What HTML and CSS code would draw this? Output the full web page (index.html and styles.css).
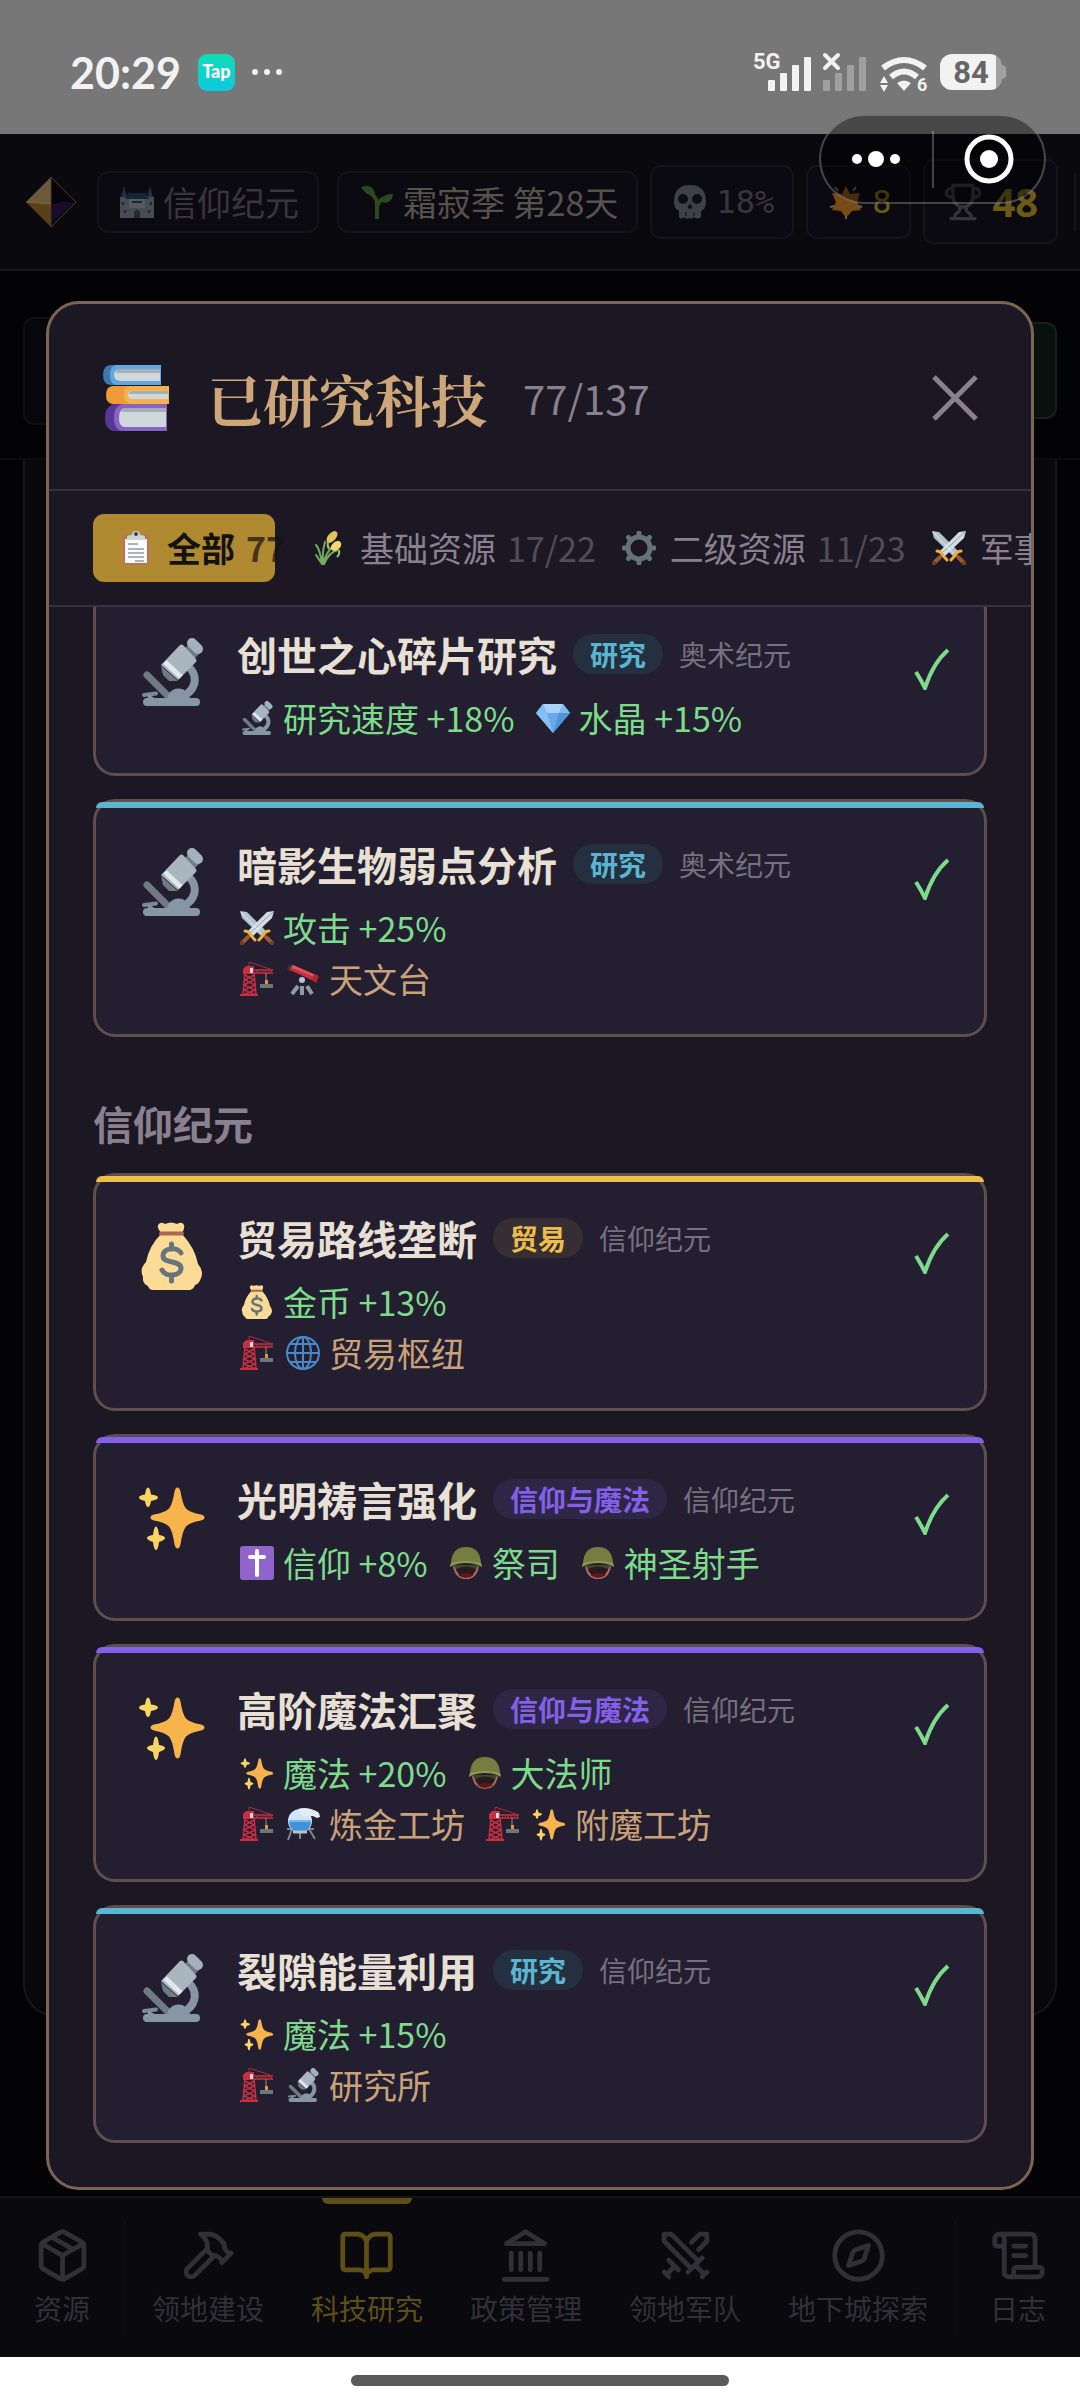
FILE: index.html
```html
<!DOCTYPE html>
<html lang="zh-CN">

<head>
    <meta charset="UTF-8">
    <meta name="viewport" content="width=device-width, initial-scale=1.0">
    <title>已研究科技</title>
    <link rel="stylesheet" href="styles.css">
</head>

<body>
    <!-- shared icons -->
    <svg class="sprite" aria-hidden="true">
        <symbol id="i-microscope" viewBox="0 0 68 68">
            <path d="M51 29c8 8 8 19-2 27" fill="none" stroke="#8796a5" stroke-width="8" />
            <path d="M9 37l20 20" stroke="#6f7a82" stroke-width="7" stroke-linecap="round" />
            <path d="M6 57l12-1.500" stroke="#7d8994" stroke-width="4" stroke-linecap="round" />
            <path d="M29 62a11.500 11.500 0 0 1 23 0z" fill="#8796a5" />
            <rect x="5" y="60" width="57" height="8" rx="4" fill="#8796a5" />
            <path d="M10 56l8 5h-8z" fill="#8796a5" />
            <path d="M48 9l10 10" stroke="#6f7a82" stroke-width="10" />
            <path d="M54 5l6 6" stroke="#a3b1bf" stroke-width="10" stroke-linecap="round" />
            <path d="M23 28l2 9 6 6 9 0z" fill="#6f7a82" />
            <path d="M42 7q2-1 3 0l13 14q1 2 0 3L40 42 23 27z" fill="#a9b6c0" />
            <path d="M27 24l16 15" stroke="#e3e8ea" stroke-width="5" />
        </symbol>
        <symbol id="i-sparkles" viewBox="0 0 68 68">
            <path d="M39.500 4.500q2 0 3 4 2 13 5.500 17 4 4 15 6 3.500 1 3.500 3t-3.500 3q-11 2-15 6-3.500 4-5.500 18-1 4-3 4t-3-4q-2-14-5.500-18-4-4-15-6-3.500-1-3.500-3t3.500-3q11-2 15-6 3.500-4 5.500-17 1-4 3-4z" fill="#f7b34c" />
            <path d="M10 4.500q2 0 3 7 7 1 7 3t-7 3.500q-1 6-3 6t-3-6q-6-1.500-6-3.500t6-3q1-7 3-7z" fill="#fbd564" />
            <path d="M18 43.500q2 0 3 8.500 6 1 6 3t-6 4q-1 8-3 8t-3-8q-6-2-6-4t6-3q1-8.500 3-8.500z" fill="#fbd564" />
        </symbol>
        <symbol id="i-bag" viewBox="0 0 68 68">
            <path d="M20 3q3-4 7-1 6-3 12 0 5-3 7 1 1 3-2 8H23q-4-5-3-8z" fill="#fbdb96" />
            <path d="M23 12h21q13 14 16 30 6 7 3 14-2 6-6 7-1 4-5 5H15q-4 0-5-4-6-3-5-9-4-8 3-15 3-16 15-28z" fill="#fbdb96" />
            <path d="M23 11.500h21" stroke="#a9674b" stroke-width="4" stroke-linecap="round" />
            <path d="M43 31c-3-6-18-6-18 3 0 8 18 4 18 12 0 9-16 9-19 2M33.500 22v5m0 26v6" fill="none" stroke="#66757a" stroke-width="5" stroke-linecap="round" />
        </symbol>
        <symbol id="i-gem" viewBox="0 0 34 34">
            <path d="M7 3h20l7 9-17 20L0 12z" fill="#68a9ea" />
            <path d="M7 3h20l-4 9H11z" fill="#a9d4f8" />
            <path d="M0 12L7 3l4 9zM27 3l7 9H23z" fill="#7fbcf2" />
            <path d="M0 12h11l6 20z" fill="#87bff0" />
            <path d="M23 12h11L17 32z" fill="#5093d8" />
        </symbol>
        <symbol id="i-blades" viewBox="0 0 34 34">
            <path d="M0 0l7 1 19 19-5 5L2 7z" fill="#b4c2cb" />
            <path d="M34 0l-7 1L8 20l5 5L32 7z" fill="#d2dde3" />
            <path d="M34 0L10 22" stroke="#8ea0ac" stroke-width="1" />
            <path d="M1 1l20 21" stroke="#e4ecf0" stroke-width="1" />
            <path d="M8 26l-6 6M26 26l6 6" stroke="#9a5a35" stroke-width="4" stroke-linecap="round" />
            <path d="M5 20q3 0 5 3t5 6M29 20q-3 0-5 3t-5 6" fill="none" stroke="#efb23d" stroke-width="3" stroke-linecap="round" />
            <circle cx="2" cy="32" r="2" fill="#6f3b22" />
            <circle cx="32" cy="32" r="2" fill="#6f3b22" />
        </symbol>
        <symbol id="i-crane" viewBox="0 0 34 34">
            <path d="M5 10L3 33M14 10l2 23M5 13l9 5-10 5 11 5-12 5M14 13l-9 5 10 5-11 5 12 5" fill="none" stroke="#c92f41" stroke-width="1.500" />
            <path d="M0 33h18" stroke="#c92f41" stroke-width="2" />
            <path d="M3 7l3-3h8v8H3z" fill="#c92f41" />
            <path d="M14 8h19M14 11h19" stroke="#c92f41" stroke-width="1.500" />
            <path d="M15 11l3-3 3 3 3-3 3 3 3-3 3 3M9 5V0l24 8" fill="none" stroke="#a92c3b" stroke-width="1" />
            <path d="M10 6h3v5h-3z" fill="#d5dde0" />
            <path d="M26 11v10" stroke="#a08a76" stroke-width="1" />
            <path d="M25 18h3v4h-3z" fill="#d69a3e" />
            <path d="M20 22h13v4H20z" fill="#6c767d" />
        </symbol>
        <symbol id="i-telescope" viewBox="0 0 34 34">
            <path d="M12 24L6 32M16 24v9M21 24l5 8" stroke="#8d9ba6" stroke-width="4" />
            <circle cx="16" cy="18" r="3" fill="#b9c4cc" />
            <path d="M3 2l5 2-3 6-4-2z" fill="#33363b" />
            <path d="M6 3l26 11-2 6L4 8z" fill="#c9303f" />
            <path d="M7 3l25 11-1 2L6 6z" fill="#e5525c" />
            <path d="M28 12l5 2-3 7-4-3z" fill="#ad2434" />
        </symbol>
        <symbol id="i-globe" viewBox="0 0 34 34">
            <g fill="none" stroke="#4b88c6" stroke-width="2">
                <circle cx="17" cy="17" r="16" />
                <ellipse cx="17" cy="17" rx="8" ry="16" />
                <path d="M17 1v32M1 17h32M4 8h26M4 26h26" />
            </g>
        </symbol>
        <symbol id="i-cross" viewBox="0 0 34 34">
            <rect width="34" height="34" rx="3" fill="#9164cb" />
            <path d="M17 5v24M10 11h14" stroke="#fff" stroke-width="4" stroke-linecap="round" />
        </symbol>
        <symbol id="i-helmet" viewBox="0 0 34 34">
            <path d="M5 20q2 12 12 12t12-12" fill="#2a1a20" stroke="#b0696b" stroke-width="2" />
            <path d="M9 29q8-4 16 0-8 6-16 0z" fill="#5a1a17" />
            <path d="M4 19h26l-3 4q-10-5-20 0z" fill="#3d4a2a" />
            <path d="M2 17Q3 1 17 1t15 16z" fill="#757d40" />
            <path d="M2 17q15-4 30 0 1 2 1 4-6-4-16-4T1 21q0-2 1-4z" fill="#8f9653" />
        </symbol>
        <symbol id="i-alembic" viewBox="0 0 34 34">
            <path d="M1 22h27M6 22L2 33M23 22l6 10M14 25v7" stroke="#7d8890" stroke-width="2" />
            <circle cx="14" cy="14" r="12" fill="#cfe5f5" />
            <path d="M12 2q9-3 20 3 2 2 2 5l-3 1q-6-4-14-1z" fill="#e3edf3" />
            <path d="M3 13h22q0 12-11 12T3 13z" fill="#3f93d9" />
            <path d="M3 13h22v2H3z" fill="#77b9ec" />
            <path d="M7 25h14" stroke="#b5c2ca" stroke-width="3" />
        </symbol>
        <symbol id="i-books" viewBox="0 0 68 68">
            <path d="M58 1v20H8q-7-1-7-10T8 1z" fill="#3c78ae" />
            <path d="M59 1v20H14q-6-1-6-10t6-10z" fill="#62a6e2" />
            <path d="M58 5v12H18q-6-1-6-6t6-6z" fill="#cfd8dd" />
            <path d="M58 5v4H14q1-4 4-4z" fill="#a4afb8" />
            <path d="M64 40v27H12q-9-1-9-13t9-14z" fill="#5a3796" />
            <path d="M65 40v27H20q-8-1-8-13t8-14z" fill="#8a61c4" />
            <path d="M64 44v19H22q-5-1-5-9t5-10z" fill="#cfd8dd" />
            <path d="M64 44v4H19q1-3 3-4z" fill="#a4afb8" />
            <path d="M67 22v18H10q-6-1-6-9t6-9z" fill="#f09a38" />
            <path d="M67 22v18H28q-6-1-6-9t6-9z" fill="#f6b14f" />
            <path d="M66 27v8H30q-4 0-4-4t4-4z" fill="#cfd8dd" />
            <path d="M66 27v3H27q1-3 3-3z" fill="#a4afb8" />
        </symbol>
        <symbol id="i-clipboard" viewBox="0 0 34 34">
            <rect x="4" y="4" width="26" height="30" rx="3" fill="#bd7257" />
            <path d="M6 8h22v24H6z" fill="#fbfbfb" />
            <path d="M9 13h10M9 18h16M9 22h16M9 26h16M16 30h9" stroke="#8f9aa0" stroke-width="1.500" />
            <path d="M8 9V6q0-2 5-2 0-4 4-4t4 4q5 0 5 2v3z" fill="#ccd4d8" />
            <circle cx="17" cy="3" r="2" fill="#3c3c46" />
        </symbol>
        <symbol id="i-wheat" viewBox="0 0 34 34">
            <path d="M11 33q3-12 12-20M12 33q5-12 14-14M10 33Q8 18 4 14M11 31q-1-10 2-20M10 33q-4-6-6-9" fill="none" stroke="#71ad5c" stroke-width="2" stroke-linecap="round" />
            <ellipse cx="20" cy="6" rx="4" ry="7" transform="rotate(40 20 6)" fill="#e4c75c" />
            <ellipse cx="24" cy="15" rx="4" ry="6" transform="rotate(50 24 15)" fill="#f0d873" />
            <path d="M16 10q-1 5 1 8M27 19q1 4-2 7" fill="none" stroke="#a7c46a" stroke-width="2" />
        </symbol>
        <symbol id="i-gear" viewBox="0 0 34 34">
            <g stroke="#66727a" fill="none">
                <circle cx="17" cy="17" r="11" stroke-width="5" />
                <path d="M17 5V2M17 29v3M5 17H2M29 17h3M8.500 8.500l-2-2M25.500 25.500l2 2M8.500 25.500l-2 2M25.500 8.500l2-2" stroke-width="5" stroke-linecap="round" />
            </g>
        </symbol>
        <symbol id="i-castle" viewBox="0 0 34 34">
            <path d="M0 12h34v21H0z" fill="#474b52" />
            <path d="M8 8h18l3 6H5z" fill="#16263a" />
            <path d="M1 12L4 1l3 11zM27 12l3-11 3 11z" fill="#1c3047" />
            <path d="M9 14h16v9H9z" fill="#565a61" />
            <path d="M14 33v-6q3-4 6 0v6z" fill="#25282d" />
            <path d="M12 17h10M3 17v3M31 17v3M5 25v3M29 25v3" stroke="#1b2836" stroke-width="2" />
        </symbol>
        <symbol id="i-sprout" viewBox="0 0 34 34">
            <path d="M17 33V17q-2-7-9-10M17 22q2-8 9-9" fill="none" stroke="#2d4a1e" stroke-width="4" stroke-linecap="round" />
            <path d="M1 2q12-4 14 7-9 2-14-7zM33 9q-1 11-12 8 2-9 12-8z" fill="#2d4a1e" />
        </symbol>
        <symbol id="i-skull" viewBox="0 0 34 34">
            <path d="M17 0Q1 0 1 17q0 7 5 9v6q2 3 5 0 2 3 5 1 2 2 5-1 4 3 7 0v-6q5-2 5-9Q33 0 17 0z" fill="#3e4145" />
            <circle cx="10" cy="14" r="5" fill="#0e0c14" />
            <circle cx="24" cy="14" r="5" fill="#0e0c14" />
            <path d="M17 19l2 4h-4zM13 27v4M21 27v4" fill="#0e0c14" stroke="#0e0c14" stroke-width="1" />
        </symbol>
        <symbol id="i-flare" viewBox="0 0 34 34">
            <path d="M17 1l4 8 10-1-3 9 4 8-9 1-6 7-5-7-9-1 4-8-4-9 10 1z" fill="#7a4a16" />
            <path d="M1 22l4-1M29 21l4 1M17 31v3M6 2l3 4M27 2l-3 4" stroke="#66605a" stroke-width="2" />
        </symbol>
        <symbol id="i-check" viewBox="0 0 36 42">
            <path d="M2 24q5 8 9 16Q19 15 34 2" fill="none" stroke="#7ddb8b" stroke-width="4" />
        </symbol>
    </svg>

    <div class="phone">
        <div class="status">
            <div class="status-left">
                <span class="time">20:29</span>
                <span class="tap">Tap</span>
                <svg width="30" height="8" viewBox="0 0 30 8" fill="#f2f2f2">
                    <circle cx="3" cy="4" r="3" />
                    <circle cx="15" cy="4" r="3" />
                    <circle cx="27" cy="4" r="3" />
                </svg>
            </div>
            <div class="status-right">
                <svg width="58" height="40" viewBox="0 0 58 40" fill="#f2f2f2">
                    <text x="0" y="17" class="net">5G</text>
                    <rect x="15" y="28" width="7" height="11" rx="1" />
                    <rect x="27" y="21" width="7" height="18" rx="1" />
                    <rect x="39" y="13" width="7" height="26" rx="1" />
                    <rect x="51" y="5" width="7" height="34" rx="1" />
                </svg>
                <svg width="45" height="40" viewBox="0 0 45 40" fill="#a0a0a0">
                    <rect x="0" y="28" width="7" height="11" rx="1" />
                    <rect x="12" y="21" width="7" height="18" rx="1" />
                    <rect x="24" y="13" width="7" height="26" rx="1" />
                    <rect x="36" y="5" width="7" height="34" rx="1" />
                    <path d="M2 3l13 13M15 3L2 16" stroke="#f2f2f2" stroke-width="4" stroke-linecap="round" />
                </svg>
                <svg width="48" height="40" viewBox="0 0 48 40" fill="#f2f2f2">
                    <path d="M3 16q21-16 42 0M11 25q13-11 26 0" fill="none" stroke="#f2f2f2" stroke-width="6" />
                    <path d="M17 31q7-5 14 0l-7 8z" />
                    <path d="M0 31l4-7 4 7zM0 33h8l-4 7z" />
                    <text x="37" y="39" class="band">6</text>
                </svg>
                <span class="battery"><span class="level">84</span></span>
            </div>
        </div>

        <div class="capsule">
            <button aria-label="更多">
                <svg width="48" height="18" viewBox="0 0 48 18" fill="#fff">
                    <circle cx="5" cy="9" r="5" />
                    <circle cx="24" cy="9" r="8" />
                    <circle cx="43" cy="9" r="5" />
                </svg>
            </button>
            <button aria-label="关闭小程序">
                <svg width="50" height="50" viewBox="0 0 50 50">
                    <circle cx="25" cy="25" r="22" fill="none" stroke="#fff" stroke-width="5" />
                    <circle cx="25" cy="25" r="9" fill="#fff" />
                </svg>
            </button>
        </div>

        <div class="game">
            <div class="topbar">
                <div class="place">
                    <svg class="logo" viewBox="0 0 50 50">
                        <path d="M25 0L0 25l25 2z" fill="#6b5a3c" />
                        <path d="M0 25l25 25V27z" fill="#5b3f16" />
                        <path d="M25 0v50l25-25z" fill="#070508" stroke="#4a3a2c" />
                        <path d="M26 45V28l12-4 10 2z" fill="#190c2a" />
                        <path d="M0 25l25 2" stroke="#8a6a30" />
                    </svg>
                    <div class="chip"><svg class="ico"><use href="#i-castle" /></svg><span>信仰纪元</span></div>
                    <div class="chip season"><svg class="ico"><use href="#i-sprout" /></svg><span>霜寂季 第28天</span></div>
                </div>
                <div class="stats">
                    <div class="chip stat mono"><svg class="ico"><use href="#i-skull" /></svg><span>18%</span></div>
                    <div class="chip stat mono gold"><svg class="ico"><use href="#i-flare" /></svg><span>8</span></div>
                    <div class="chip score gold">
                        <svg class="trophy" viewBox="0 0 24 24">
                            <path d="M6 9H4.500a2.500 2.500 0 0 1 0-5H6M18 9h1.500a2.500 2.500 0 0 0 0-5H18M4 22h16M10 14.660V17c0 .55-.47.98-.97 1.210C7.850 18.750 7 20.240 7 22M14 14.660V17c0 .55.47.98.97 1.210C16.150 18.750 17 20.240 17 22M18 2H6v7a6 6 0 0 0 12 0V2z" />
                        </svg>
                        <span>48</span>
                    </div>
                </div>
                <div class="split"></div>
            </div>

            <div class="toolbar">
                <div class="tool"></div>
                <div class="tool go"></div>
            </div>
            <div class="board"></div>

            <nav class="tabbar">
                <a href="#" class="side left">
                    <svg viewBox="0 0 24 24"><path d="M11 21.730a2 2 0 0 0 2 0l7-4A2 2 0 0 0 21 16V8a2 2 0 0 0-1-1.730l-7-4a2 2 0 0 0-2 0l-7 4A2 2 0 0 0 3 8v8a2 2 0 0 0 1 1.730zM12 22V12M3.290 7L12 12l8.710-5M7.500 4.270l9 5.150" /></svg>
                    资源
                </a>
                <div class="middle">
                    <a href="#">
                        <svg viewBox="0 0 24 24"><path d="M15 12l-8.373 8.373a1 1 0 1 1-3-3L12 9M18 15l4-4M21.500 11.500l-1.914-1.914A2 2 0 0 1 19 8.172V7l-2.260-2.260a6 6 0 0 0-4.202-1.756L9 2.960l.92.82A6.180 6.180 0 0 1 12 8.400V10l2 2h1.172a2 2 0 0 1 1.414.586L18.500 14.500" /></svg>
                        领地建设
                    </a>
                    <a href="#" class="on">
                        <svg viewBox="0 0 24 24"><path d="M12 7v14M3 18a1 1 0 0 1-1-1V4a1 1 0 0 1 1-1h5a4 4 0 0 1 4 4 4 4 0 0 1 4-4h5a1 1 0 0 1 1 1v13a1 1 0 0 1-1 1h-6a3 3 0 0 0-3 3 3 3 0 0 0-3-3z" /></svg>
                        科技研究
                    </a>
                    <a href="#">
                        <svg viewBox="0 0 24 24"><path d="M3 22h18M6 18v-7M10 18v-7M14 18v-7M18 18v-7M12 2l8 5H4z" /></svg>
                        政策管理
                    </a>
                    <a href="#">
                        <svg viewBox="0 0 24 24"><path d="M14.500 17.500L3 6V3h3l11.500 11.500M13 19l6-6M16 16l4 4M19 21l2-2M14.500 6.500L18 3h3v3l-3.500 3.500M5 14l4 4M7 17l-3 3M3 19l2 2" /></svg>
                        领地军队
                    </a>
                    <a href="#">
                        <svg viewBox="0 0 24 24"><circle cx="12" cy="12" r="10" /><path d="M16.240 7.760l-1.804 5.411a2 2 0 0 1-1.265 1.265L7.760 16.240l1.804-5.411a2 2 0 0 1 1.265-1.265z" /></svg>
                        地下城探索
                    </a>
                </div>
                <a href="#" class="side right">
                    <svg viewBox="0 0 24 24"><path d="M15 12h-5M15 8h-5M19 17V5a2 2 0 0 0-2-2H4M8 21h12a2 2 0 0 0 2-2v-1a1 1 0 0 0-1-1H11a1 1 0 0 0-1 1v1a2 2 0 1 1-4 0V5a2 2 0 1 0-4 0v2a1 1 0 0 0 1 1h3" /></svg>
                    日志
                </a>
            </nav>

            <div class="overlay">
                <div class="modal">
                    <div class="modal-head">
                        <svg class="head-icon"><use href="#i-books" /></svg>
                        <h1>已研究科技</h1>
                        <span class="total">77/137</span>
                        <button class="close" aria-label="关闭">
                            <svg width="46" height="46" viewBox="0 0 46 46">
                                <path d="M2 2l42 42M44 2L2 44" stroke="#8a8090" stroke-width="5" />
                            </svg>
                        </button>
                    </div>
                    <div class="filters">
                        <button class="active"><svg class="ico"><use href="#i-clipboard" /></svg><span>全部</span><span class="num">77</span></button>
                        <button><svg class="ico"><use href="#i-wheat" /></svg><span>基础资源</span><span class="num">17/22</span></button>
                        <button><svg class="ico"><use href="#i-gear" /></svg><span>二级资源</span><span class="num">11/23</span></button>
                        <button><svg class="ico"><use href="#i-blades" /></svg><span>军事</span></button>
                    </div>
                    <div class="list">
                        <div class="list-inner">
                            <div class="card research">
                                <svg class="pic"><use href="#i-microscope" /></svg>
                                <div class="info">
                                    <div class="name"><h3>创世之心碎片研究</h3><span class="badge">研究</span><span class="era">奥术纪元</span></div>
                                    <div class="effects">
                                        <span><svg class="ico"><use href="#i-microscope" /></svg>研究速度 +18%</span>
                                        <span><svg class="ico"><use href="#i-gem" /></svg>水晶 +15%</span>
                                    </div>
                                </div>
                                <svg class="check"><use href="#i-check" /></svg>
                            </div>
                            <div class="card research">
                                <svg class="pic"><use href="#i-microscope" /></svg>
                                <div class="info">
                                    <div class="name"><h3>暗影生物弱点分析</h3><span class="badge">研究</span><span class="era">奥术纪元</span></div>
                                    <div class="effects">
                                        <span><svg class="ico"><use href="#i-blades" /></svg>攻击 +25%</span>
                                    </div>
                                    <div class="unlocks">
                                        <span><svg class="ico"><use href="#i-crane" /></svg><svg class="ico"><use href="#i-telescope" /></svg>天文台</span>
                                    </div>
                                </div>
                                <svg class="check"><use href="#i-check" /></svg>
                            </div>

                            <h2>信仰纪元</h2>
                            <div class="card trade">
                                <svg class="pic"><use href="#i-bag" /></svg>
                                <div class="info">
                                    <div class="name"><h3>贸易路线垄断</h3><span class="badge">贸易</span><span class="era">信仰纪元</span></div>
                                    <div class="effects">
                                        <span><svg class="ico"><use href="#i-bag" /></svg>金币 +13%</span>
                                    </div>
                                    <div class="unlocks">
                                        <span><svg class="ico"><use href="#i-crane" /></svg><svg class="ico"><use href="#i-globe" /></svg>贸易枢纽</span>
                                    </div>
                                </div>
                                <svg class="check"><use href="#i-check" /></svg>
                            </div>
                            <div class="card magic">
                                <svg class="pic"><use href="#i-sparkles" /></svg>
                                <div class="info">
                                    <div class="name"><h3>光明祷言强化</h3><span class="badge">信仰与魔法</span><span class="era">信仰纪元</span></div>
                                    <div class="effects">
                                        <span><svg class="ico"><use href="#i-cross" /></svg>信仰 +8%</span>
                                        <span><svg class="ico"><use href="#i-helmet" /></svg>祭司</span>
                                        <span><svg class="ico"><use href="#i-helmet" /></svg>神圣射手</span>
                                    </div>
                                </div>
                                <svg class="check"><use href="#i-check" /></svg>
                            </div>
                            <div class="card magic">
                                <svg class="pic"><use href="#i-sparkles" /></svg>
                                <div class="info">
                                    <div class="name"><h3>高阶魔法汇聚</h3><span class="badge">信仰与魔法</span><span class="era">信仰纪元</span></div>
                                    <div class="effects">
                                        <span><svg class="ico"><use href="#i-sparkles" /></svg>魔法 +20%</span>
                                        <span><svg class="ico"><use href="#i-helmet" /></svg>大法师</span>
                                    </div>
                                    <div class="unlocks">
                                        <span><svg class="ico"><use href="#i-crane" /></svg><svg class="ico"><use href="#i-alembic" /></svg>炼金工坊</span>
                                        <span><svg class="ico"><use href="#i-crane" /></svg><svg class="ico"><use href="#i-sparkles" /></svg>附魔工坊</span>
                                    </div>
                                </div>
                                <svg class="check"><use href="#i-check" /></svg>
                            </div>
                            <div class="card research">
                                <svg class="pic"><use href="#i-microscope" /></svg>
                                <div class="info">
                                    <div class="name"><h3>裂隙能量利用</h3><span class="badge">研究</span><span class="era">信仰纪元</span></div>
                                    <div class="effects">
                                        <span><svg class="ico"><use href="#i-sparkles" /></svg>魔法 +15%</span>
                                    </div>
                                    <div class="unlocks">
                                        <span><svg class="ico"><use href="#i-crane" /></svg><svg class="ico"><use href="#i-microscope" /></svg>研究所</span>
                                    </div>
                                </div>
                                <svg class="check"><use href="#i-check" /></svg>
                            </div>
                        </div>
                    </div>
                </div>
            </div>
        </div>

        <div class="homebar"><div class="pill"></div></div>
    </div>
</body>

</html>
```

FILE: styles.css
```css
* {
    padding: 0;
    margin: 0;
    box-sizing: border-box;
}

body {
    font-family: "Noto Sans CJK SC", sans-serif;
    font-size: 34px;
    background: #030305;
}

button {
    font: inherit;
    color: inherit;
    background: none;
    border: none;
    cursor: pointer;
}

a {
    color: inherit;
    text-decoration: none;
}

.sprite {
    position: absolute;
    width: 0;
    height: 0;
}

.ico {
    width: 34px;
    height: 34px;
    margin: 0 3px;
    flex: none;
}

.phone {
    position: relative;
    display: flex;
    flex-direction: column;
    height: 100vh;
}

/* system status bar */
.status {
    height: 134px;
    flex: none;
    padding: 10px 74px 0 70px;
    background: #777;
    color: #f2f2f2;
    display: flex;
    align-items: center;
    justify-content: space-between;
}

.status-left,
.status-right {
    display: flex;
    align-items: center;
}

.status-left {
    gap: 17px;
}

.status-right {
    gap: 12px;
}

.status svg {
    overflow: visible;
}

.time {
    font-family: Lato, sans-serif;
    font-size: 43px;
    font-weight: bold;
}

.tap {
    width: 37px;
    height: 37px;
    border-radius: 9px;
    background: linear-gradient(#12dcb4, #0cc8e0);
    color: #fff;
    font-family: Lato, sans-serif;
    font-size: 18px;
    font-weight: 900;
    line-height: 35px;
    text-align: center;
}

.net {
    font: bold 22px Roboto, sans-serif;
}

.band {
    font: bold 18px Roboto, sans-serif;
}

.battery {
    position: relative;
    width: 62px;
    height: 36px;
    margin-right: 4px;
    border-radius: 12px;
    background: linear-gradient(to right, #f2f2f2 56px, #a0a0a0 56px);
}

.battery::after {
    content: "";
    position: absolute;
    top: 11px;
    right: -4px;
    width: 4px;
    height: 14px;
    border-radius: 0 4px 4px 0;
    background: #a0a0a0;
}

.level {
    display: block;
    color: #666;
    font: bold 31px/38px Roboto, sans-serif;
    text-align: center;
}

/* mini program buttons, float over everything */
.capsule {
    position: absolute;
    z-index: 3;
    top: 114px;
    right: 34px;
    width: 227px;
    height: 90px;
    border: 2px solid rgba(255, 255, 255, 0.25);
    border-radius: 45px;
    background: rgba(0, 0, 0, 0.4);
    display: flex;
    align-items: center;
}

.capsule button {
    flex: 1;
    height: 57px;
    display: flex;
    align-items: center;
    justify-content: center;
}

.capsule button + button {
    border-left: 2px solid rgba(255, 255, 255, 0.25);
}

/* game screen, dimmed behind the dialog */
.game {
    position: relative;
    flex: 1;
    min-height: 0;
    display: flex;
    flex-direction: column;
}

.topbar {
    height: 137px;
    flex: none;
    padding: 0 0 0 26px;
    background: #09090e;
    border-bottom: 2px solid #1a1614;
    display: flex;
    align-items: center;
    overflow: hidden;
}

.place,
.stats {
    display: flex;
    align-items: center;
    flex: none;
}

.place {
    gap: 18px;
}

.stats {
    gap: 12px;
    margin-left: 12px;
}

.logo {
    width: 50px;
    height: 50px;
    margin-right: 3px;
}

.chip {
    height: 62px;
    padding: 0 18px;
    border: 2px solid #15131b;
    border-radius: 11px;
    background: #0b0a11;
    color: #38353e;
    display: flex;
    align-items: center;
    gap: 6px;
    line-height: 50px;
    white-space: nowrap;
}

.season {
    color: #56524e;
}

.stat {
    height: 74px;
}

.mono {
    font-family: "DejaVu Sans Mono", monospace;
    font-size: 32px;
}

.score {
    height: 85px;
    gap: 9px;
    font-family: "Noto Sans", sans-serif;
    font-size: 40px;
    font-weight: bold;
}

.gold {
    color: #6b5b15;
}

.trophy {
    width: 40px;
    height: 40px;
    fill: none;
    stroke: #34323a;
    stroke-width: 2;
}

.split {
    flex: none;
    width: 2px;
    height: 58px;
    margin-left: 16px;
    background: #15131b;
}

.toolbar {
    height: 189px;
    flex: none;
    padding: 12px 23px 0;
    border-bottom: 2px solid #0c0b10;
    display: flex;
    align-items: center;
    justify-content: space-between;
}

.tool {
    width: 200px;
    height: 108px;
    border: 2px solid #100f16;
    border-radius: 11px;
    background: #07070b;
}

.go {
    height: 97px;
    border-color: #15221a;
    background: #09110e;
}

.board {
    flex: 1;
    margin: 0 23px 179px;
    border: 2px solid #1a1715;
    border-top: none;
    border-radius: 0 0 33px 33px;
    background: #08080b;
}

.tabbar {
    height: 161px;
    flex: none;
    background: #09090e;
    border-top: 2px solid #17151a;
    color: #323037;
    font-size: 28px;
    line-height: 40px;
    display: flex;
    align-items: center;
}

.tabbar a {
    display: flex;
    flex-direction: column;
    align-items: center;
    gap: 4px;
    white-space: nowrap;
}

.tabbar svg {
    width: 57px;
    height: 57px;
    fill: none;
    stroke: currentColor;
    stroke-width: 2;
    stroke-linecap: round;
    stroke-linejoin: round;
}

.side {
    width: 126px;
    height: 115px;
    justify-content: center;
}

.left {
    border-right: 2px solid #0e0d13;
}

.right {
    border-left: 2px solid #0e0d13;
}

.middle {
    flex: 1;
    align-self: stretch;
    display: flex;
    justify-content: center;
}

.middle a {
    position: relative;
    justify-content: center;
    padding: 0 23px;
}

.middle a + a {
    padding-left: 24px;
}

.tabbar .on {
    color: #5e4f17;
}

.on::before {
    content: "";
    position: absolute;
    top: 0;
    width: 90px;
    height: 6px;
    border-radius: 0 0 6px 6px;
    background: #5e4f17;
}

.homebar {
    height: 46px;
    flex: none;
    background: #fff;
    display: flex;
    align-items: center;
    justify-content: center;
}

.pill {
    width: 35%;
    height: 11px;
    border-radius: 6px;
    background: #5a5a5a;
}

/* dialog */
.overlay {
    position: absolute;
    inset: 0;
    padding: 0 46px;
    display: flex;
    align-items: center;
}

.modal {
    flex: 1;
    min-width: 0;
    height: 85%;
    border: 3px solid #7a6556;
    border-radius: 33px;
    background: #1b1823;
    overflow: hidden;
    display: flex;
    flex-direction: column;
}

.modal-head {
    height: 187px;
    flex: none;
    padding: 4px 53px 0 53px;
    border-bottom: 2px solid #36313e;
    display: flex;
    align-items: center;
}

.head-icon {
    width: 68px;
    height: 68px;
}

h1 {
    margin-left: 37px;
    color: #cda67a;
    font-family: "Noto Serif CJK SC", "Noto Sans CJK SC", serif;
    font-size: 56px;
    line-height: 80px;
    font-weight: bold;
}

.total {
    margin-left: 36px;
    color: #8a8090;
    font-size: 40px;
}

.close {
    margin-left: auto;
    display: flex;
}

.filters {
    height: 116px;
    flex: none;
    padding: 0 44px;
    border-bottom: 2px solid #36313e;
    color: #8a8090;
    display: flex;
    align-items: center;
    gap: 23px;
    overflow: hidden;
}

.filters button {
    flex: none;
    height: 68px;
    display: flex;
    align-items: center;
    gap: 11px;
    line-height: 50px;
    white-space: nowrap;
}

.filters .active {
    width: 182px;
    margin-right: 11px;
    padding-left: 23px;
    border-radius: 11px;
    background: #af8a30;
    color: #14110f;
    font-weight: bold;
}

.num {
    opacity: 0.5;
}

.active .num {
    opacity: 0.7;
}

/* column-reverse keeps the list scrolled to the newest techs */
.list {
    flex: 1;
    min-height: 0;
    overflow-y: auto;
    scrollbar-width: none;
    display: flex;
    flex-direction: column-reverse;
}

.list-inner {
    padding: 0 44px 44px;
}

h2 {
    margin: 57px 0 21px;
    color: #8a8090;
    font-size: 40px;
    line-height: 58px;
}

.card {
    position: relative;
    padding: 30px 34px 30px 42px;
    border: 3px solid #5d4f4e;
    border-radius: 22px;
    background: #231f31;
    display: flex;
    align-items: flex-start;
}

.card + .card {
    margin-top: 23px;
}

/* coloured strip for the tech category */
.card::before {
    content: "";
    position: absolute;
    top: 0;
    left: 0;
    right: 0;
    height: 6px;
    border-radius: 6px 6px 0 0;
    background: var(--tone);
}

.research {
    --tone: #5bb5d0;
    --tint: #242f40;
}

.trade {
    --tone: #ecbf4d;
    --tint: #372e33;
}

.magic {
    --tone: #8460e8;
    --tint: #2d2645;
}

.pic {
    flex: none;
    width: 68px;
    height: 68px;
    margin: 16px 31px 0 0;
}

.info {
    flex: 1;
}

.name {
    height: 64px;
    margin-bottom: 6px;
    display: flex;
    align-items: center;
    gap: 16px;
}

h3 {
    color: #e8e0d5;
    font-size: 40px;
    line-height: 58px;
}

.badge {
    padding: 0 17px;
    border-radius: 20px;
    background: var(--tint);
    color: var(--tone);
    font-size: 28px;
    line-height: 40px;
    font-weight: bold;
}

.era {
    color: #77707f;
    font-size: 28px;
}

.effects,
.unlocks {
    display: flex;
    gap: 18px;
    line-height: 51px;
}

.effects {
    color: #7ddb8b;
}

.unlocks {
    color: #c9a27a;
}

.effects span,
.unlocks span {
    display: flex;
    align-items: center;
    gap: 6px;
}

.check {
    flex: none;
    width: 36px;
    height: 42px;
    margin-top: 26px;
}
```
